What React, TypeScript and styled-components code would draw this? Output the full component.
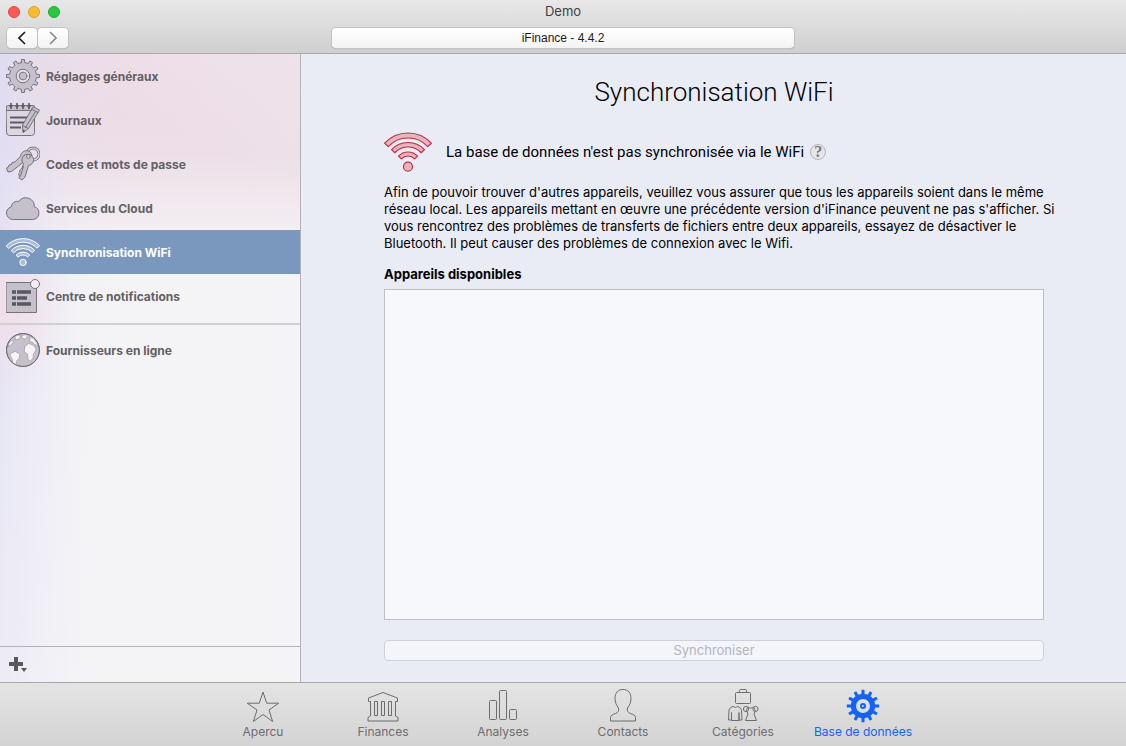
import React from "react";
import styled, { createGlobalStyle } from "styled-components";

const GlobalStyle = createGlobalStyle`
  *, *::before, *::after { box-sizing: border-box; }
  body {
    margin: 0;
    font-family: Inter, "Liberation Sans", sans-serif;
    font-size: 13px;
    line-height: 17px;
    color: #000;
  }
  button { font: inherit; color: inherit; cursor: default; }
`;

/* ---------- geometry helpers ---------- */

function gearPath(c: number, outer: number, root: number, teeth: number) {
  const step = (Math.PI * 2) / teeth;
  const at = (r: number, a: number) =>
    `${(c + r * Math.sin(a)).toFixed(2)} ${(c - r * Math.cos(a)).toFixed(2)}`;
  const parts: string[] = [];
  for (let i = 0; i < teeth; i++) {
    const a = i * step;
    parts.push(
      `${i ? "L" : "M"}${at(root, a - step * 0.25)}`,
      `L${at(outer, a - step * 0.17)}`,
      `A${outer} ${outer} 0 0 1 ${at(outer, a + step * 0.17)}`,
      `L${at(root, a + step * 0.25)}`,
      `A${root} ${root} 0 0 1 ${at(root, a + step * 0.75)}`
    );
  }
  return parts.join("") + "Z";
}

function bandPath(cx: number, cy: number, outer: number, inner: number) {
  const a = (47 * Math.PI) / 180;
  const s = Math.sin(a);
  const k = Math.cos(a);
  return `M${cx - outer * s} ${cy - outer * k}A${outer} ${outer} 0 0 1 ${cx + outer * s} ${
    cy - outer * k
  }L${cx + inner * s} ${cy - inner * k}A${inner} ${inner} 0 0 0 ${cx - inner * s} ${
    cy - inner * k
  }Z`;
}

/* ---------- icons ---------- */

const SideSvg = styled.svg`
  flex: none;
  width: 34px;
  height: 36px;
  fill: #c5c0cb;
  stroke: #76747a;
  stroke-width: 1;
  stroke-linejoin: round;
  stroke-linecap: round;
`;

const GearIcon = () => (
  <SideSvg viewBox="0 0 34 36" aria-hidden="true">
    <g transform="translate(0 1)">
      <path d={gearPath(17, 16.5, 13.4, 12)} />
      <circle cx="17" cy="17" r="6.8" fill="#e4dfe8" />
      <circle cx="17" cy="17" r="3.8" />
    </g>
  </SideSvg>
);

const JournalIcon = () => (
  <SideSvg viewBox="0 0 34 36" aria-hidden="true">
    <path d="M.5 6.5h28v24a3 3 0 0 1-3 3h-22a3 3 0 0 1-3-3Z" fill="#dcd6e2" />
    <path d="M.5 4.5a1 1 0 0 1 1-1h26a1 1 0 0 1 1 1v4H.5Z" />
    <path
      d="M5 1.5v5M11 1.5v5M17 1.5v5M23 1.5v5"
      stroke="#55535a"
      strokeWidth="1.6"
    />
    <path d="M3.500 4h3M9.500 4h3M15.500 4h3M21.500 4h3" stroke="#55535a" />
    <path d="M4 15.500h18M4 20.500h14M4 25.500h11" stroke="#5e5c63" strokeWidth="2" strokeLinecap="butt" />
    <path d="m27.500 5 6 3-11 18.500-5.500 4-.5-7Z" />
    <path d="m26 7.500 6 3M16.500 23.500l6 3M29.500 9.500 19.500 25.500" fill="none" />
    <path d="m17 30.500-.3-3 2.500 1.500Z" fill="#55535a" stroke="none" />
  </SideSvg>
);

const KeysIcon = () => (
  <SideSvg viewBox="0 0 34 36" aria-hidden="true">
    <circle cx="27" cy="8" r="6" fill="none" strokeWidth="3" />
    <circle cx="27" cy="8" r="6" fill="none" stroke="#e6dbe6" strokeWidth="1.2" />
    <path d="M14.500 10a6 6 0 0 1 9-4.500 6 6 0 0 1 1 9 6 6 0 0 1-7 1.500L5.500 25.500l-3.500.5L.5 22l2-1 .5-2 2.500-.5.500-2 2.500-.5Z" />
    <path d="M18 9.500a5.700 5.700 0 0 1 8.500 1 5.700 5.700 0 0 1-4 9L19 31l-3 3-3-2 .5-2-1-2 1.500-1.500-.5-2 2-1.500 2-5a5.700 5.700 0 0 1 .5-8.500Z" />
    <circle cx="22.500" cy="10.500" r="1.800" fill="#e6dbe6" />
    <path d="m17.500 20.500-3 9.500" fill="none" />
  </SideSvg>
);

const CloudIcon = () => (
  <SideSvg viewBox="0 0 34 36" aria-hidden="true">
    <path d="M7 29.500a6.500 6.500 0 0 1-6.500-6.500c0-3 2-5.500 4.700-6.200a6 6 0 0 1 7.600-5.300 8.500 8.500 0 0 1 15.500 5.300 6.500 6.500 0 0 1-1.300 12.700Z" />
  </SideSvg>
);

const WifiShape = () => (
  <>
    <path d={bandPath(24, 34, 32, 27)} />
    <path d={bandPath(24, 34, 22.5, 18)} />
    <path d={bandPath(24, 34, 13, 9)} />
    <circle cx="24" cy="35.700" r="4.500" />
  </>
);

const SideWifiSvg = styled(SideSvg)`
  fill: #a9bcd6;
  stroke: #fff;
  stroke-width: 1.4;
`;

const SideWifiIcon = () => (
  <SideWifiSvg viewBox="0 -4 48 50" aria-hidden="true">
    <WifiShape />
  </SideWifiSvg>
);

const NotificationIcon = () => (
  <SideSvg viewBox="0 0 34 36" aria-hidden="true">
    <path d="M.5 4.500h30v30H.5Z" />
    <path
      d="M6 14h4M11 14h14M6 20h4M11 20h10M6 26h4M11 26h14"
      stroke="#5a585f"
      strokeWidth="3.400"
      strokeLinecap="butt"
    />
    <circle cx="29" cy="6" r="4.500" fill="#f4eff3" />
  </SideSvg>
);

const GlobeIcon = () => (
  <SideSvg viewBox="0 0 34 36" aria-hidden="true">
    <circle cx="17" cy="18" r="16.500" />
    <g stroke="#96939a" strokeWidth=".6" fill="#f6f4f7">
      <path d="M9 4.500 12 3l2.500 1.500L13 7l-3 .5ZM16 3.500l4-1 1.500 1.500-2.500 3-2.500-.5Z" />
      <path d="m6 20.500 3.500-1 4.500 3-1 4-2.500 2.500-.5 4-3-2-1-4.500-2-3Z" />
      <path d="m19 14.500 3.500-3 4.500 1.500 3 4-1 3-1.500 1.500-.5 4.500-2.500 3-2.500-1.500-.5-5.500-3-2Z" />
      <path d="m24 4.500 3.500 2L31 11l.5 2.500-3-1-2-2.500-3-.5.5-2.500Z" />
      <path d="M3 11.500 5.500 8l2 1.500-1 2.500L3 14Z" />
    </g>
    <circle cx="17" cy="18" r="16.500" fill="none" />
  </SideSvg>
);

const TabSvg = styled.svg`
  width: 34px;
  height: 34px;
  margin-bottom: 1px;
  fill: none;
  stroke: currentColor;
  stroke-width: 1;
  stroke-linejoin: round;
`;

const StarIcon = () => (
  <TabSvg viewBox="0 0 34 34" aria-hidden="true">
    <path
      d="M17 3l3.700 11.200h12L23 21l3.600 11.500L17 25.500l-9.600 7L11 21 1.300 14.200h12Z"
      strokeLinejoin="miter"
    />
  </TabSvg>
);

const BankIcon = () => (
  <TabSvg viewBox="0 0 34 34" aria-hidden="true">
    <path d="M17 3.500 31.500 9v3.500h-2V27l2.500 1.500v3.500H2v-3.500L4.500 27V12.500h-2V9Z" />
    <path d="M8.500 12.500h3v14h-3ZM15.500 12.500h3v14h-3ZM22.500 12.500h3v14h-3Z" />
  </TabSvg>
);

const ChartIcon = () => (
  <TabSvg viewBox="0 0 34 34" aria-hidden="true">
    <rect x="3.500" y="11.500" width="7" height="19" rx="1" />
    <rect x="13.500" y="1.500" width="7" height="29" rx="1" />
    <rect x="23.500" y="20.500" width="7" height="10" rx="1" />
  </TabSvg>
);

const ContactIcon = () => (
  <TabSvg viewBox="0 0 34 34" aria-hidden="true">
    <path d="M17 .5c-5 0-8 3.500-8 9 0 3.500 1.200 6.500 3.500 9.500.8 3-.5 4.500-3 5.500-3 1-5 2-5 4v3.500h25v-3.500c0-2-2-3-5-4-2.500-1-3.800-2.500-3-5.500 2.300-3 3.500-6 3.500-9.500 0-5.500-3-9-8-9Z" />
  </TabSvg>
);

const CategoryIcon = () => (
  <TabSvg viewBox="0 0 34 34" aria-hidden="true">
    <rect x="9.500" y="3.500" width="15" height="11" rx="1" />
    <path d="M13.500 3.500v-2a1 1 0 0 1 1-1h5a1 1 0 0 1 1 1v2" />
    <path d="M7 17.500c1.500 1 3 1 4.500 0 2 .5 3.500 1.500 4 4l.5 9.500h-3v-7.500v8H5.500v-8V31h-3l.5-9.500c.3-2.500 2-3.500 4-4Z" />
    <path d="M22 18c1.500 1.500 4 1.500 5.500 0M21 22.500l1 2.500-2.500 6.500h11L28 25l1-2.500" />
    <circle cx="20" cy="20" r="2.600" />
    <circle cx="29.500" cy="20" r="2.600" />
    <path d="m22 18-1.500 2.500.5 2M27.500 18l1.500 2.500v2" />
  </TabSvg>
);

const DatabaseIcon = () => (
  <TabSvg viewBox="0 0 34 34" aria-hidden="true">
    <path
      fill="currentColor"
      stroke="none"
      fillRule="evenodd"
      d={
        gearPath(17, 16.2, 12.2, 12) +
        "M17 10a7 7 0 1 0 0 14 7 7 0 1 0 0-14ZM17 14a3 3 0 1 1 0 6 3 3 0 1 1 0-6ZM17 16a1 1 0 1 0 0 2 1 1 0 1 0 0-2Z"
      }
    />
  </TabSvg>
);

/* ---------- window frame ---------- */

const Window = styled.div`
  display: flex;
  flex-direction: column;
  min-height: 100vh;
`;

const TitleBar = styled.header`
  display: grid;
  grid-template-rows: 23px 30px;
  background: linear-gradient(#e8e8e8, #d0cfd0);
  border-bottom: 1px solid #a9a8a9;
`;

const BarRow = styled.div`
  display: grid;
  grid-template-columns: 1fr minmax(0, 462px) 1fr;
  align-items: center;
  padding: 0 7px;
`;

const Lights = styled.div`
  display: flex;
  gap: 8px;
  padding-left: 1px;
`;

const Light = styled.button<{ $fill: string; $edge: string }>`
  width: 12px;
  height: 12px;
  padding: 0;
  border: 1px solid ${(p) => p.$edge};
  border-radius: 50%;
  background: ${(p) => p.$fill};
`;

const WindowTitle = styled.div`
  text-align: center;
  color: #404040;
`;

const NavGroup = styled.div`
  display: flex;
  gap: 1px;
`;

const BarButton = styled.button`
  height: 20px;
  padding: 0;
  border: 0;
  border-radius: 4px;
  background: linear-gradient(#fff, #f3f3f3);
  box-shadow: 0 0 0 1px #c3c2c3, 0 1px 1px #9c9c9c;
  font-family: "Liberation Sans", sans-serif;
  font-size: 12px;
  line-height: 20px;
  color: #1c1c1c;
`;

const NavButton = styled(BarButton)<{ $dim?: boolean }>`
  display: grid;
  place-items: center;
  width: 30px;
  color: ${(p) => (p.$dim ? "#8a8a8a" : "#1c1c1c")};
`;

const Chevron = ({ d }: { d: string }) => (
  <svg width="8" height="14" viewBox="0 0 8 14" aria-hidden="true">
    <path d={d} fill="none" stroke="currentColor" strokeWidth="1.600" />
  </svg>
);

/* ---------- body ---------- */

const Body = styled.div`
  flex: 1;
  display: flex;
`;

const Sidebar = styled.aside`
  flex: none;
  width: 301px;
  display: flex;
  flex-direction: column;
  border-right: 1px solid #b3b3b7;
  background:
    radial-gradient(70px 90px at 0 250px, rgba(242, 222, 232, 0.95), rgba(242, 222, 232, 0)),
    linear-gradient(rgba(240, 240, 248, 0), rgba(244, 244, 248, 0.6)),
    linear-gradient(90deg, rgba(222, 220, 243, 0.9), rgba(225, 222, 243, 0.5) 35px, rgba(230, 226, 243, 0.15) 75px, rgba(236, 230, 243, 0) 120px),
    linear-gradient(200deg, rgba(245, 245, 245, 0.35), rgba(245, 245, 245, 0) 120px),
    linear-gradient(#ecd9e4, #ecdce5 100px, #f1eaef 160px, #f4f3f4 220px, #f4f4f4);
`;

const SideNav = styled.nav`
  flex: 1;
`;

const SideLink = styled.a<{ $active?: boolean }>`
  display: flex;
  align-items: center;
  gap: 6px;
  height: 44px;
  padding: 0 6px;
  font-size: 12px;
  font-weight: 700;
  text-decoration: none;
  color: ${(p) => (p.$active ? "#fff" : "#626064")};
  background: ${(p) => (p.$active ? "#7a98be" : "transparent")};
`;

const Divider = styled.hr`
  height: 2px;
  margin: 5px 0 3px;
  border: 0;
  background: #d0cfd2;
`;

const SideFooter = styled.div`
  display: flex;
  height: 36px;
  padding: 9px 0 0 9px;
  border-top: 1px solid #b3b3b7;
`;

const AddButton = styled.button`
  display: flex;
  align-self: flex-start;
  padding: 0;
  border: 0;
  background: none;
`;

const Main = styled.main`
  flex: 1;
  display: flex;
  flex-direction: column;
  min-width: 0;
  padding: 20px 82px 21px 83px;
  background: #e9ecf5;
`;

const Heading = styled.h1`
  margin: 0;
  font-family: Roboto, Inter, sans-serif;
  font-size: 26px;
  line-height: 36px;
  font-weight: 300;
  text-align: center;
`;

const Status = styled.div`
  display: flex;
  align-items: center;
  height: 42px;
  margin-top: 21px;
  font-family: Roboto, Inter, sans-serif;
  font-size: 15px;
  line-height: 18px;
`;

const StatusWifi = styled.svg`
  flex: none;
  width: 48px;
  height: 42px;
  margin-right: 14px;
  fill: #e5b4bd;
  stroke: #c42a3e;
  stroke-width: 1.2;
  stroke-linejoin: round;
`;

const HelpButton = styled.button`
  width: 16px;
  height: 16px;
  margin-left: 6px;
  padding: 0;
  border: 1px solid #b4b4b8;
  border-radius: 50%;
  background: #e6e6ea;
  font-family: "Liberation Serif", serif;
  font-size: 16px;
  line-height: 14px;
  font-weight: 700;
  color: #77777a;
`;

const Help = styled.p`
  margin: 11px -16px 0 0;
`;

const SectionTitle = styled.h2`
  margin: 14px 0 0;
  font-size: 13px;
  line-height: 17px;
  font-weight: 700;
`;

const DeviceList = styled.ul`
  flex: 1;
  min-height: 120px;
  margin: 6px 0 20px;
  padding: 0;
  list-style: none;
  border: 1px solid #bfc0c5;
  background: #f7f8fc;
`;

const SyncButton = styled.button`
  height: 21px;
  padding: 0;
  border: 1px solid #cfd1d8;
  border-radius: 4px;
  background: #f4f5fa;
  line-height: 19px;
  color: #b3b4b9;
`;

/* ---------- bottom tabs ---------- */

const TabBar = styled.nav`
  display: flex;
  justify-content: center;
  height: 64px;
  border-top: 1px solid #a9a8a9;
  background: linear-gradient(#e4e4e4, #d3d3d4);
`;

const Tab = styled.a<{ $active?: boolean }>`
  display: flex;
  flex-direction: column;
  align-items: center;
  width: 120px;
  padding-top: 6px;
  font-size: 12px;
  line-height: 16px;
  text-decoration: none;
  color: ${(p) => (p.$active ? "#1463f8" : "#6d6d6f")};
`;

const sections = [
  { label: "Réglages généraux", Icon: GearIcon },
  { label: "Journaux", Icon: JournalIcon },
  { label: "Codes et mots de passe", Icon: KeysIcon },
  { label: "Services du Cloud", Icon: CloudIcon },
  { label: "Synchronisation WiFi", Icon: SideWifiIcon, active: true },
  { label: "Centre de notifications", Icon: NotificationIcon },
];

const tabs = [
  { label: "Apercu", Icon: StarIcon },
  { label: "Finances", Icon: BankIcon },
  { label: "Analyses", Icon: ChartIcon },
  { label: "Contacts", Icon: ContactIcon },
  { label: "Catégories", Icon: CategoryIcon },
  { label: "Base de données", Icon: DatabaseIcon, active: true },
];

export default function App() {
  return (
    <Window>
      <GlobalStyle />
      <TitleBar>
        <BarRow>
          <Lights>
            <Light $fill="#fc5b57" $edge="#e2463f" aria-label="Fermer" />
            <Light $fill="#fdbc2f" $edge="#dfa023" aria-label="Réduire" />
            <Light $fill="#28c840" $edge="#1dab2c" aria-label="Agrandir" />
          </Lights>
          <WindowTitle>Demo</WindowTitle>
        </BarRow>
        <BarRow>
          <NavGroup>
            <NavButton aria-label="Précédent">
              <Chevron d="M7 1 1 7l6 6" />
            </NavButton>
            <NavButton $dim aria-label="Suivant">
              <Chevron d="m1 1 6 6-6 6" />
            </NavButton>
          </NavGroup>
          <BarButton>iFinance - 4.4.2</BarButton>
        </BarRow>
      </TitleBar>

      <Body>
        <Sidebar>
          <SideNav>
            {sections.map(({ label, Icon, active }) => (
              <SideLink key={label} href="#" $active={active}>
                <Icon />
                {label}
              </SideLink>
            ))}
            <Divider />
            <SideLink href="#">
              <GlobeIcon />
              Fournisseurs en ligne
            </SideLink>
          </SideNav>
          <SideFooter>
            <AddButton aria-label="Ajouter">
              <svg width="20" height="16" viewBox="0 0 20 16" fill="#59595c" aria-hidden="true">
                <path d="M5 1h4v5h5v4H9v5H5v-5H0V6h5ZM12 12h6l-3 4Z" />
              </svg>
            </AddButton>
          </SideFooter>
        </Sidebar>

        <Main>
          <Heading>Synchronisation WiFi</Heading>
          <Status>
            <StatusWifi viewBox="0 0 48 42" aria-hidden="true">
              <WifiShape />
            </StatusWifi>
            La base de données n'est pas synchronisée via le WiFi
            <HelpButton>?</HelpButton>
          </Status>
          <Help>
            Afin de pouvoir trouver d'autres appareils, veuillez vous assurer que tous les appareils
            soient dans le même réseau local. Les appareils mettant en œuvre une précédente version
            d'iFinance peuvent ne pas s'afficher. Si vous rencontrez des problèmes de transferts de
            fichiers entre deux appareils, essayez de désactiver le Bluetooth. Il peut causer des
            problèmes de connexion avec le Wifi.
          </Help>
          <SectionTitle id="devices">Appareils disponibles</SectionTitle>
          <DeviceList aria-labelledby="devices" />
          <SyncButton disabled>Synchroniser</SyncButton>
        </Main>
      </Body>

      <TabBar>
        {tabs.map(({ label, Icon, active }) => (
          <Tab key={label} href="#" $active={active}>
            <Icon />
            {label}
          </Tab>
        ))}
      </TabBar>
    </Window>
  );
}
